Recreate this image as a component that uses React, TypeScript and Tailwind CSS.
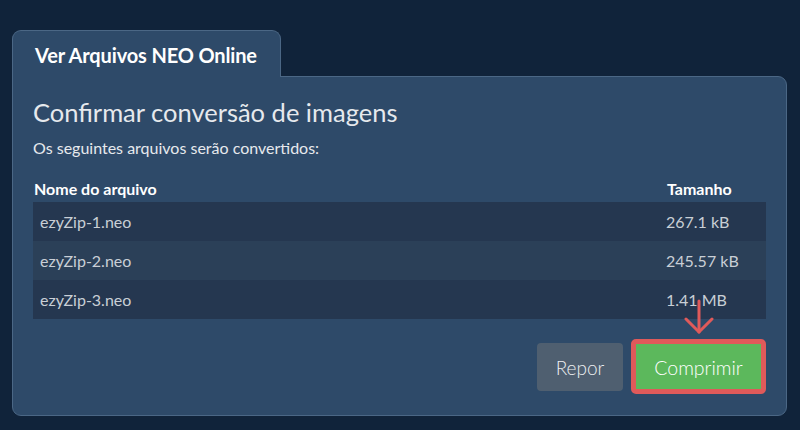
import React from 'react';

const files = [
  { name: 'ezyZip-1.neo', size: '267.1 kB' },
  { name: 'ezyZip-2.neo', size: '245.57 kB' },
  { name: 'ezyZip-3.neo', size: '1.41 MB' },
];

const DownArrow: React.FC = () => (
  <svg
    className="absolute left-1/2 -translate-x-1/2 bottom-full mb-[4px]"
    width="30"
    height="36"
    viewBox="0 0 30 36"
    fill="none"
    stroke="#e05a5a"
    strokeWidth="3"
    strokeLinecap="round"
    strokeLinejoin="round"
  >
    <path d="M15 2 V33" />
    <path d="M2 20 L15 33 L28 20" />
  </svg>
);

const App: React.FC = () => {
  return (
    <div
      className="w-[800px] h-[430px] bg-[#10233a] pt-[30px] pl-[12px] overflow-hidden"
      style={{ fontFamily: 'Lato, "Noto Sans", sans-serif' }}
    >
      <div className="w-[775px]">
        {/* tab */}
        <div className="w-[269px] h-[47px] bg-[#2e4a69] border border-b-0 border-[#4b6785] rounded-t-[9px] pl-[22px] flex items-center relative z-10 -mb-px">
          <span className="text-[20px] font-bold text-white tracking-[-0.15px] pt-[2px]">Ver Arquivos NEO Online</span>
        </div>

        {/* panel */}
        <div className="bg-[#2e4a69] border border-[#4b6785] rounded-b-[9px] rounded-tr-[9px] h-[340px] px-[20px] pt-[19px] flex flex-col">
          <h1 className="text-[25.5px] leading-[32px] text-[#e6e9ed] font-normal">Confirmar conversão de imagens</h1>
          <p className="text-[16px] leading-[20px] text-[#e6e9ed] mt-[10px]">Os seguintes arquivos serão convertidos:</p>

          <div className="mt-[17px]">
            <div className="grid grid-cols-[1fr_100px] text-[16px] font-bold text-white h-[27px] items-center">
              <span className="pl-px">Nome do arquivo</span>
              <span className="pl-[1px]">Tamanho</span>
            </div>
            {files.map((f, i) => (
              <div
                key={f.name}
                className={`grid grid-cols-[1fr_100px] h-[39px] items-center text-[16px] text-[#c9cfd6] ${i % 2 === 0 ? 'bg-[#253750]' : 'bg-[#2b4058]'}`}
              >
                <span className="pl-[7px]">{f.name}</span>
                <span>{f.size}</span>
              </div>
            ))}
          </div>

          <div className="flex justify-end items-center gap-[8px] mt-[20px]">
            <button className="w-[86px] h-[48px] rounded-[4px] bg-[#4f5f70] text-[19px] font-light text-[#eef0f2] pt-[3px]">Repor</button>
            <div className="relative">
              <DownArrow />
              <button className="w-[135px] h-[55px] rounded-[5px] border-[5px] border-[#e05a5a] bg-[#5cb85c] text-[19.5px] font-light text-white pt-[3px]">
                Comprimir
              </button>
            </div>
          </div>
        </div>
      </div>
    </div>
  );
};

export default App;
